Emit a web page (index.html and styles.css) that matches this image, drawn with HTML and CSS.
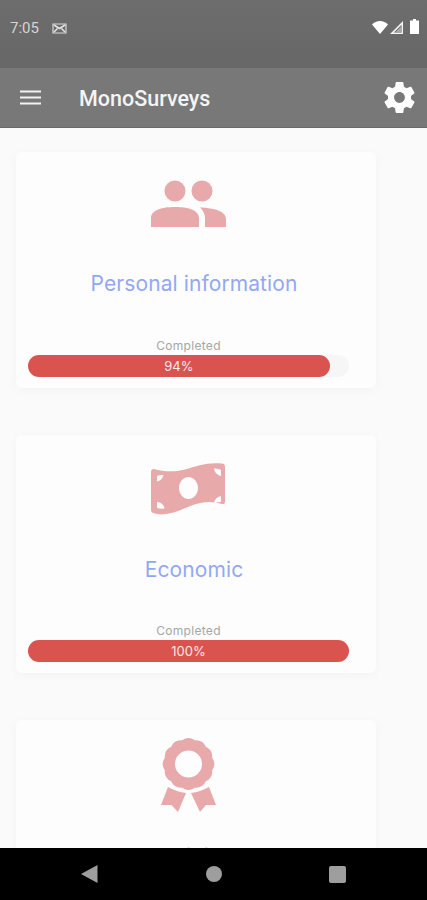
FILE: index.html
```html
<!DOCTYPE html>
<html lang="en">
<head>
<meta charset="utf-8">
<title>MonoSurveys</title>
<link rel="stylesheet" href="styles.css">
</head>
<body>
<div class="phone">
  <header class="status">
    <div class="status-left">
      <span class="time">7:05</span>
      <svg class="status-m" viewBox="0 0 15 11"><path d="M1 1h13v9H1z" fill="none" stroke="#d8d8d8" stroke-width="1.200"/><path d="M2 2l5.500 3.500L13 2M2 9l3.500-3.500M13 9L9.500 5.500" fill="none" stroke="#e4e4e4" stroke-width="1.500"/></svg>
    </div>
    <div class="status-right">
      <svg class="i-wifi" viewBox="0 0 16 13"><path d="M0 3.500C2 1.300 5 0 8 0s6 1.300 8 3.500L8 13z" fill="#fff"/></svg>
      <svg class="i-signal" viewBox="0 0 13 13"><path d="M13 0v13H0zM11.500 3.800L3.800 11.500h7.700z" fill="#f4f4f4" fill-rule="evenodd"/><path d="M11.500 5v6.500H5z" fill="#a8a8a8"/></svg>
      <svg class="i-batt" viewBox="0 0 9 15"><path d="M3 0h3v1.500h3V15H0V1.500h3z" fill="#fff"/></svg>
    </div>
  </header>
  <nav class="appbar">
    <svg class="menu" viewBox="0 0 21 15"><path d="M0 1.500h21M0 7.500h21M0 13.500h21" stroke="#f2f2f2" stroke-width="2"/></svg>
    <h1 class="title">MonoSurveys</h1>
    <svg class="gear" viewBox="0 0 24 24"><path fill="#fff" fill-rule="evenodd" d="M19.430 12.980c.04-.32.070-.640.070-.980s-.03-.660-.070-.980l2.110-1.650c.19-.150.240-.420.120-.640l-2-3.460c-.12-.220-.390-.300-.610-.220l-2.490 1c-.52-.400-1.080-.730-1.690-.980l-.38-2.650C14.460 2.180 14.250 2 14 2h-4c-.25 0-.460.180-.490.420l-.38 2.650c-.610.250-1.170.590-1.690.980l-2.490-1c-.230-.090-.490 0-.610.220l-2 3.460c-.130.220-.070.490.120.640l2.110 1.650c-.04.320-.070.650-.070.980s.03.660.070.980l-2.110 1.650c-.19.150-.24.420-.12.640l2 3.460c.12.220.390.300.610.220l2.490-1c.52.400 1.080.730 1.690.980l.38 2.650c.03.240.240.420.490.420h4c.25 0 .460-.180.490-.420l.38-2.650c.610-.250 1.170-.590 1.690-.980l2.490 1c.230.090.490 0 .610-.220l2-3.460c.12-.220.070-.490-.120-.640l-2.110-1.650zM12 15.500c-1.930 0-3.500-1.570-3.500-3.500s1.570-3.500 3.500-3.500 3.500 1.570 3.500 3.500-1.570 3.500-3.500 3.500z"/></svg>
  </nav>
  <main class="list">
    <section class="card">
      <svg class="ic ic-people" viewBox="0 0 75 48"><circle cx="24" cy="11" r="10.500"/><circle cx="51" cy="11" r="10.500"/><path d="M0 47V38C0 30 11 27 24 27s24 3 24 11v9zM49 27.500C63 28 75 31 75 39v8H54v-9c0-4-2-7.500-5-10.500z"/></svg>
      <h2 class="name">Personal information</h2>
      <p class="done">Completed</p>
      <div class="track"><div class="fill" style="width:94%">94%</div></div>
    </section>
    <section class="card">
      <svg class="ic ic-money" viewBox="0 0 75 54"><path fill-rule="evenodd" d="M0 9C0 7 1 6 3 6c9 2.500 19 3.500 31 .5C46 3 56-1 71 .5c2 .2 3 1.500 3 3.500v34.500c0 2-1 3-3 2.500C60 37.500 50 38.500 38 43.500 26 48.500 14 54 2 50c-1.500-.5-2-2-2-4zM37.500 14c-5.200 0-9.500 5-9.500 11s4.300 11 9.500 11S47 31 47 25s-4.300-11-9.500-11zM6 13v5.500c3-.5 5.500-3 6.500-6.500-2.500 0-4.500.2-6.500 1zM63 5.500c.5 3.500 3 6.500 7 7.500V7c-2.500-1-4.500-1.500-7-1.500zM6 39v6c2.500.8 5 1 7.500.5C13 42 10.500 39.500 6 39zM70 33c-3.500.5-6 3-7 6.500 2.500 0 5-.3 7-.8z"/></svg>
      <h2 class="name">Economic</h2>
      <p class="done">Completed</p>
      <div class="track"><div class="fill" style="width:100%">100%</div></div>
    </section>
    <section class="card">
      <svg class="ic ic-award" viewBox="0 0 56 74"><path fill-rule="evenodd" d="M33.840 2.340A11 11 0 0 1 44.820 8.680 11 11 0 0 1 51.160 19.660 11 11 0 0 1 51.160 32.340 11 11 0 0 1 44.820 43.320 11 11 0 0 1 33.840 49.660 11 11 0 0 1 21.160 49.660 11 11 0 0 1 10.180 43.320 11 11 0 0 1 3.840 32.340 11 11 0 0 1 3.840 19.660 11 11 0 0 1 10.180 8.680 11 11 0 0 1 21.160 2.340 11 11 0 0 1 33.840 2.340zM27.500 12.500a13.500 13.500 0 1 0 0 27 13.500 13.500 0 0 0 0-27z"/><path d="M7 49Q16 54 25 55L17 74 10.500 67 0 67zM48 49Q39 54 30 55L39 74 45 67 55 67z"/></svg>
      <h2 class="name name-dark">Training</h2>
    </section>
  </main>
  <footer class="navbar">
    <svg class="nb-back" viewBox="0 0 17 18"><path d="M16.500 0v18L0 9z" fill="#9e9e9e"/></svg>
    <span class="nb-home"></span>
    <span class="nb-square"></span>
  </footer>
</div>
</body>
</html>
```

FILE: styles.css
```css
* { box-sizing: border-box; }
html, body { margin: 0; padding: 0; }
body { background: #fafafa; font-family: "Inter", "Liberation Sans", sans-serif; }
.phone { width: 427px; height: 900px; display: flex; flex-direction: column; overflow: hidden; }

.status { height: 68px; flex: none; display: flex; justify-content: space-between; align-items: flex-start; padding: 19px 8px 0 10px; background: linear-gradient(#6c6d6c, #666766); }
.status-left { display: flex; align-items: center; gap: 13px; }
.time { font: 15px/18px "Roboto", sans-serif; color: #d4d4d4; }
.status-m { width: 15px; height: 11px; }
.status-right { display: flex; align-items: flex-end; height: 15px; }
.i-wifi { width: 16px; height: 13px; margin-right: 2px; }
.i-signal { width: 13px; height: 13px; margin-right: 7px; }
.i-batt { width: 9px; height: 15px; }

.appbar { height: 60px; flex: none; display: flex; align-items: center; padding: 0 9px 0 20px; background: #777877; border-bottom: 1px solid #6a6a6a; }
.menu { width: 21px; height: 15px; }
.title { margin: 3px 0 0 38px; flex: 1; font: 500 21.500px/24px "Roboto", sans-serif; color: #f4f4f4; }
.gear { width: 37px; height: 37px; }

.list { flex: 1; min-height: 0; overflow: hidden; padding: 24px 51px 0 16px; display: flex; flex-direction: column; gap: 47px; }
.card { flex: none; height: 236px; padding: 28px 27px 11px 12px; display: flex; flex-direction: column; align-items: center; background: #fdfdfd; border-radius: 6px; box-shadow: 0 2px 10px rgba(0,0,0,.03); }
.card + .card { height: 238px; }
.card:last-child { height: 240px; }
.ic { fill: #e8a9ab; flex: none; display: block; }
.ic-people { width: 75px; height: 48px; margin-bottom: 43px; }
.ic-money { width: 75px; height: 54px; margin-bottom: 40px; }
.ic-award { width: 56px; height: 74px; margin-top: -10px; margin-bottom: 32px; }
.name { margin: 0 0 0 11px; font: 400 21px/26px "Inter", sans-serif; color: #93a8f2; letter-spacing: .1px; white-space: nowrap; }
.name-dark { color: #2f3c8c; }
.done { margin: auto 0 2px; font: 12px/14px "Inter", sans-serif; color: #a6a6a6; letter-spacing: .3px; }
.track { width: 321px; height: 22px; border-radius: 11px; background: #f6f6f6; }
.fill { height: 22px; border-radius: 11px; background: #d9534f; color: #fbe9e8; font: 13px/22px "Inter", sans-serif; text-align: center; }

.navbar { height: 52px; flex: none; background: #000; display: flex; align-items: center; justify-content: space-between; padding: 0 81px; position: relative; z-index: 1; }
.nb-back { width: 17px; height: 18px; }
.nb-home { width: 16px; height: 16px; border-radius: 50%; background: #9e9e9e; }
.nb-square { width: 17px; height: 17px; border-radius: 2px; background: #9e9e9e; }
```
